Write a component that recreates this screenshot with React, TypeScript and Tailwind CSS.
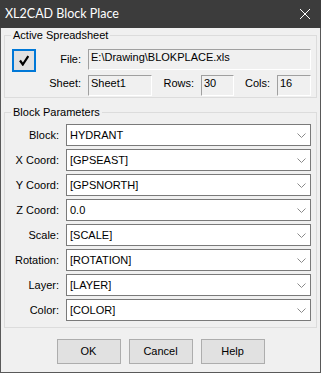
import React from 'react';

const params = [
    { label: 'Block:', value: 'HYDRANT' },
    { label: 'X Coord:', value: '[GPSEAST]' },
    { label: 'Y Coord:', value: '[GPSNORTH]' },
    { label: 'Z Coord:', value: '0.0' },
    { label: 'Scale:', value: '[SCALE]' },
    { label: 'Rotation:', value: '[ROTATION]' },
    { label: 'Layer:', value: '[LAYER]' },
    { label: 'Color:', value: '[COLOR]' },
];

const ReadOnlyBox = ({ value, className }: { value: string; className: string }) => (
    <div
        className={`h-[21px] bg-[#f0f0f0] border border-t-[#a0a0a0] border-l-[#a0a0a0] border-r-white border-b-white pl-[2px] pt-[1px] leading-[13px] ${className}`}
    >
        {value}
    </div>
);

const Chevron = () => (
    <svg width="9" height="5" viewBox="0 0 9 5" className="shrink-0">
        <polyline points="0.5,0.5 4.5,4.5 8.5,0.5" fill="none" stroke="#8a8a8a" strokeWidth="1" />
    </svg>
);

const App = () => {
    return (
        <div
            className="w-[321px] h-[373px] bg-[#f0f0f0] border-x border-b border-[#595959] flex flex-col text-[11px] text-black"
            style={{ fontFamily: '"Liberation Sans", Arial, sans-serif' }}
        >
            {/* Title bar */}
            <div className="h-[28px] -mx-px bg-[#3c3c3c] flex items-center justify-between pl-[5px] pr-[11px] shrink-0">
                <span className="text-white text-[12.5px]" style={{ fontFamily: 'Lato, sans-serif' }}>
                    XL2CAD Block Place
                </span>
                <svg width="10" height="10" viewBox="0 0 10 10">
                    <path d="M0 0 L10 10 M10 0 L0 10" stroke="#ffffff" strokeWidth="1" />
                </svg>
            </div>

            <div className="px-[3px] flex flex-col">
                {/* Active Spreadsheet */}
                <fieldset className="border border-[#dcdcdc] pb-[1px]">
                    <legend className="ml-[6px] px-[2px] leading-[14px]">Active Spreadsheet</legend>
                    <div className="flex mt-[7px] pl-[7px] pr-[5px]">
                        <div className="w-[24px] h-[23px] border-2 border-[#0078d7] bg-[#e1e1e1] flex items-center justify-center shrink-0">
                            <svg width="10" height="11" viewBox="0 0 10 11">
                                <polyline points="1,5.5 3.8,9.5 9.3,1" fill="none" stroke="#000" strokeWidth="2.2" />
                            </svg>
                        </div>
                        <div className="flex-1 flex flex-col gap-[5px]">
                            <div className="flex items-center">
                                <span className="w-[52px] text-right pr-[7px]">File:</span>
                                <ReadOnlyBox value="E:\Drawing\BLOKPLACE.xls" className="flex-1" />
                            </div>
                            <div className="flex items-center">
                                <span className="w-[52px] text-right pr-[7px] -mt-[4px]">Sheet:</span>
                                <ReadOnlyBox value="Sheet1" className="w-[64px]" />
                                <span className="w-[49px] text-right pr-[7px] -mt-[4px]">Rows:</span>
                                <ReadOnlyBox value="30" className="w-[33px]" />
                                <span className="w-[43px] text-right pr-[7px] -mt-[4px]">Cols:</span>
                                <ReadOnlyBox value="16" className="flex-1" />
                            </div>
                        </div>
                    </div>
                </fieldset>

                {/* Block Parameters */}
                <fieldset className="border border-[#dcdcdc] mt-[7px] pb-[6px]">
                    <legend className="ml-[6px] px-[2px] leading-[14px]">Block Parameters</legend>
                    <div className="flex flex-col gap-[3px] mt-[5px] pr-[5px]">
                        {params.map((p) => (
                            <div key={p.label} className="flex items-center">
                                <span className="w-[54px] text-right mr-[7px]">{p.label}</span>
                                <div className="flex-1 h-[22px] bg-white border border-[#7a7a7a] flex items-center justify-between pl-[3px] pr-[4px]">
                                    <span>{p.value}</span>
                                    <Chevron />
                                </div>
                            </div>
                        ))}
                    </div>
                </fieldset>

                {/* Buttons */}
                <div className="flex justify-center gap-[8px] mt-[11px]">
                    {['OK', 'Cancel', 'Help'].map((b) => (
                        <button
                            key={b}
                            className="w-[64px] h-[25px] bg-[#e1e1e1] border border-[#adadad] text-[11px]"
                        >
                            {b}
                        </button>
                    ))}
                </div>
            </div>
        </div>
    );
};

export default App;
